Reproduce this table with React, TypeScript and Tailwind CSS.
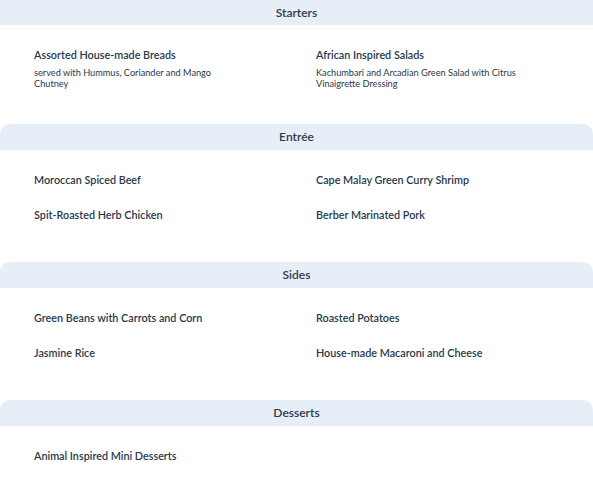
import React from "react";

type Item = { title: string; desc?: string };
type Section = { name: string; items: Item[]; mt: string };

const sections: Section[] = [
  {
    name: "Starters",
    mt: "",
    items: [
      { title: "Assorted House-made Breads", desc: "served with Hummus, Coriander and Mango Chutney" },
      { title: "African Inspired Salads", desc: "Kachumbari and Arcadian Green Salad with Citrus Vinaigrette Dressing" },
    ],
  },
  {
    name: "Entrée",
    mt: "mt-[35px]",
    items: [
      { title: "Moroccan Spiced Beef" },
      { title: "Cape Malay Green Curry Shrimp" },
      { title: "Spit-Roasted Herb Chicken" },
      { title: "Berber Marinated Pork" },
    ],
  },
  {
    name: "Sides",
    mt: "mt-[40px]",
    items: [
      { title: "Green Beans with Carrots and Corn" },
      { title: "Roasted Potatoes" },
      { title: "Jasmine Rice" },
      { title: "House-made Macaroni and Cheese" },
    ],
  },
  {
    name: "Desserts",
    mt: "mt-[40px]",
    items: [{ title: "Animal Inspired Mini Desserts" }],
  },
];

export default function App() {
  return (
    <div
      className="w-[593px] h-[482px] overflow-hidden bg-white text-[#27384d]"
      style={{ fontFamily: "Lato, 'Open Sans', sans-serif" }}
    >
      {sections.map((s, i) => (
        <div key={s.name} className={s.mt}>
          <div
            className={
              i === 0
                ? "h-[25px] bg-[#e6eef7] flex items-center justify-center text-[12px] font-semibold text-[#2d3b4d]"
                : "h-[26px] bg-[#e6eef7] rounded-t-[10px] flex items-center justify-center text-[12px] font-semibold text-[#2d3b4d]"
            }
          >
            {s.name}
          </div>
          <div className="grid grid-cols-[282px_1fr] gap-y-[20px] pl-[34px] pt-[22px]">
            {s.items.map((it) => (
              <div key={it.title} className="w-[228px]">
                <div className="text-[10.8px] font-semibold leading-[15px]">{it.title}</div>
                {it.desc && <div className="mt-[5px] w-[208px] text-[9.2px] leading-[11px]">{it.desc}</div>}
              </div>
            ))}
          </div>
        </div>
      ))}
    </div>
  );
}
